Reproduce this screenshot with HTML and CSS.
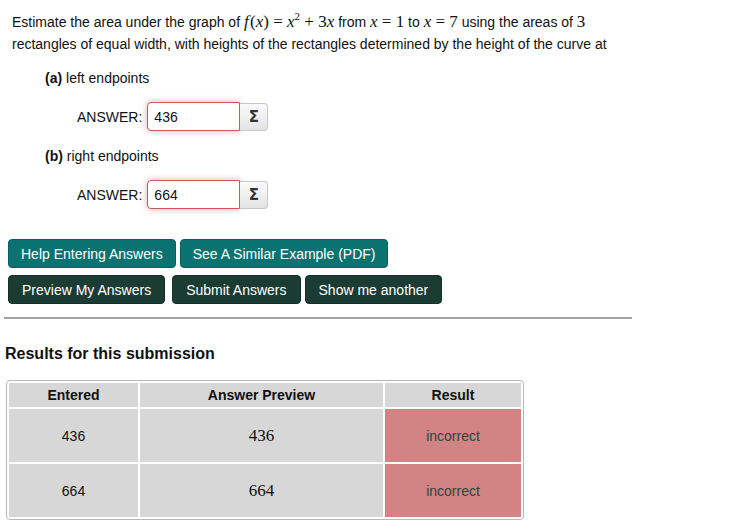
FILE: index.html
```html
<!DOCTYPE html>
<html lang="en">
<head>
    <meta charset="UTF-8">
    <meta name="viewport" content="width=device-width, initial-scale=1.0">
    <title>Problem</title>
    <link rel="stylesheet" href="styles.css">
</head>
<body>

<div class="problem">
    <p class="statement">
        Estimate the area under the graph of <span class="math"><i>f</i>&#8202;(<i>x</i>) = <i>x</i><sup>2</sup> + 3<i>x</i></span>
        from <span class="math"><i>x</i> = 1</span> to <span class="math"><i>x</i> = 7</span> using the areas of <span class="math">3</span>
        rectangles of equal width, with heights of the rectangles determined by the height of the curve at
    </p>

    <p class="part"><b>(a)</b> left endpoints</p>
    <div class="answer">
        <span class="label">ANSWER:</span>
        <input type="text" class="entry" value="436">
        <button class="sigma">&Sigma;</button>
    </div>

    <p class="part"><b>(b)</b> right endpoints</p>
    <div class="answer">
        <span class="label">ANSWER:</span>
        <input type="text" class="entry" value="664">
        <button class="sigma">&Sigma;</button>
    </div>
</div>

<div class="buttons">
    <div class="row">
        <button class="btn help">Help Entering Answers</button>
        <button class="btn help">See A Similar Example (PDF)</button>
    </div>
    <div class="row">
        <button class="btn main">Preview My Answers</button>
        <button class="btn main">Submit Answers</button>
        <button class="btn main">Show me another</button>
    </div>
</div>

<hr>

<h3 class="results-title">Results for this submission</h3>

<table class="results">
    <tr>
        <th class="col-entered">Entered</th>
        <th class="col-preview">Answer Preview</th>
        <th class="col-result">Result</th>
    </tr>
    <tr>
        <td>436</td>
        <td class="preview">436</td>
        <td class="wrong">incorrect</td>
    </tr>
    <tr>
        <td>664</td>
        <td class="preview">664</td>
        <td class="wrong">incorrect</td>
    </tr>
</table>

</body>
</html>
```

FILE: styles.css
```css
* {
    margin: 0;
    padding: 0;
    box-sizing: border-box;
}

body {
    font-family: 'Liberation Sans', Arial, sans-serif;
    font-size: 14px;
    color: #111;
    background: #fff;
}

.problem {
    padding: 11px 12px 0;
}

.statement {
    max-width: 620px;
    line-height: 22px;
}

.math {
    font-family: 'Liberation Serif', 'Times New Roman', serif;
    font-size: 17px;
}

.math sup {
    font-size: 11px;
    vertical-align: 7px;
    line-height: 0;
}

.part {
    margin-top: 12px;
    padding-left: 33px;
    line-height: 22px;
}

.answer {
    display: flex;
    align-items: center;
    margin: 13px 0 14px;
    padding-left: 65px;
}

.answer .label {
    margin-right: 5px;
}

.entry {
    width: 93px;
    height: 29px;
    border: 1px solid #c9595b;
    border-radius: 4px 0 0 4px;
    box-shadow: 0 0 6px rgba(200, 70, 70, 0.45);
    padding: 0 6px;
    font-family: 'Liberation Sans', Arial, sans-serif;
    font-size: 14px;
    color: #111;
    outline: 0;
}

.sigma {
    width: 28px;
    height: 28px;
    border: 1px solid #c8c8c8;
    border-left: 0;
    border-radius: 0 4px 4px 0;
    background: linear-gradient(#fbfbfb, #e4e4e4);
    font-family: 'DejaVu Sans', sans-serif;
    font-weight: bold;
    font-size: 15px;
    color: #333;
}

.buttons {
    padding: 16px 8px 0;
}

.buttons .row {
    display: flex;
    gap: 4px;
    margin-bottom: 7px;
}

.btn {
    height: 29px;
    padding: 0 12px;
    border: 0;
    border-radius: 4px;
    font-family: 'Liberation Sans', Arial, sans-serif;
    font-size: 14px;
    color: #fff;
    cursor: pointer;
}

.btn.help {
    background: #0a7372;
    border: 1px solid #075f5e;
}

.btn.main {
    background: #1b3c33;
    border: 1px solid #13302a;
    padding: 0 13px;
}

.btn.main:first-child {
    margin-right: 3px;
}

hr {
    margin: 13px 106px 0 4px;
    border: 0;
    border-top: 2px solid #a3a3a3;
}

.results-title {
    margin: 25px 0 0 5px;
    font-size: 16px;
    line-height: 20px;
}

.results {
    margin: 16px 0 0 6px;
    width: 518px;
    border: 1px solid #b8b8b8;
    border-radius: 4px;
    border-spacing: 2px;
    background: #fff;
}

.results th,
.results td {
    background: #d7d7d7;
    text-align: center;
}

.results th {
    height: 24px;
    font-size: 14px;
}

.results td {
    height: 53px;
}

.col-entered {
    width: 129px;
}

.col-result {
    width: 136px;
}

.results td.preview {
    font-family: 'Liberation Serif', 'Times New Roman', serif;
    font-size: 17px;
}

.results td.wrong {
    background: #d18483;
    color: #2b473e;
}
```
